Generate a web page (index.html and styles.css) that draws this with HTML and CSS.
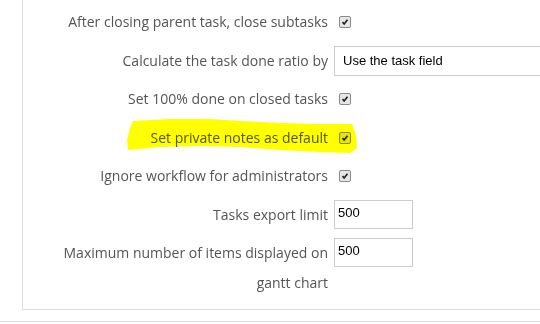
FILE: index.html
```html
<!DOCTYPE html>
<html lang="en-US">
<head>
<title>Issue tracking settings</title>
    <link rel="stylesheet" href="styles.css">
</head>

<body>
    <div class="Box">
        <div class="Settings">
            <p class="Row">
                <label class="Label">After closing parent task, close subtasks</label>
                <span class="Check"><svg viewBox="0 0 12 12" width="12" height="12"><path d="M3 6.2 L5 8.4 L9 3.4" fill="none" stroke="#222" stroke-width="2"/></svg></span>
            </p>
            <p class="Row">
                <label class="Label">Calculate the task done ratio by</label>
                <span class="Select">Use the task field</span>
            </p>
            <p class="Row">
                <label class="Label">Set 100% done on closed tasks</label>
                <span class="Check"><svg viewBox="0 0 12 12" width="12" height="12"><path d="M3 6.2 L5 8.4 L9 3.4" fill="none" stroke="#222" stroke-width="2"/></svg></span>
            </p>
            <p class="Row">
                <label class="Label">Set private notes as default</label>
                <span class="Check"><svg viewBox="0 0 12 12" width="12" height="12"><path d="M3 6.2 L5 8.4 L9 3.4" fill="none" stroke="#222" stroke-width="2"/></svg></span>
            </p>
            <p class="Row">
                <label class="Label">Ignore workflow for administrators</label>
                <span class="Check"><svg viewBox="0 0 12 12" width="12" height="12"><path d="M3 6.2 L5 8.4 L9 3.4" fill="none" stroke="#222" stroke-width="2"/></svg></span>
            </p>
            <p class="Row">
                <label class="Label">Tasks export limit</label>
                <span class="Field">500</span>
            </p>
            <p class="Row">
                <label class="Label">Maximum number of items displayed on gantt chart</label>
                <span class="Field">500</span>
            </p>
        </div>
    </div>
    <div class="Footer"></div>

    <!-- marker stroke drawn over the screenshot -->
    <svg class="Marker" width="540" height="324" viewBox="0 0 540 324">
        <polygon points="133,121 170,119 210,119 240,121 280,123 320,124 352,124 356,135 357,148 350,153 320,152 280,150 240,147 200,146 160,147 128,150 127,140 130,128" fill="#ffff00"/>
    </svg>
</body>

</html>
```

FILE: styles.css
```css
body {
    margin: 0px;
    font-family: "Open Sans", "Liberation Sans", sans-serif;
    font-size: 14px;
    color: #555;
    background-color: #FFF;
    overflow: hidden;
}

.Box {
    margin-left: 22px;
    height: 310px;
    box-sizing: border-box;
    border-left: 1px solid #DDD;
    border-bottom: 1px solid #DDD;
    padding-top: 7px;
    overflow: hidden;
}

.Settings {
    display: flex;
    flex-direction: column;
    gap: 8.5px;
    padding-left: 25px;
}

.Row {
    display: flex;
    align-items: flex-start;
    gap: 6px;
    margin: 0px;
}

.Label {
    flex: none;
    width: 280px;
    text-align: right;
    line-height: 30px;
}

.Check {
    display: flex;
    width: 12px;
    height: 12px;
    margin: 9px 0px 0px 5px;
    box-sizing: border-box;
    border: 1px solid #8A8A8A;
    border-radius: 2px;
    background-color: #E6E6E6;
    align-items: center;
    justify-content: center;
}

.Check svg {
    width: 10px;
    height: 10px;
}

.Select {
    flex: none;
    width: 210px;
    height: 30px;
    box-sizing: border-box;
    border: 1px solid #CCC;
    padding: 0px 8px;
    font-family: "Liberation Sans", Arial, sans-serif;
    font-size: 13px;
    line-height: 28px;
    color: #000;
}

.Field {
    flex: none;
    width: 79px;
    height: 29px;
    box-sizing: border-box;
    border: 1px solid #CCC;
    padding: 0px 3px 3px 3px;
    font-family: "Liberation Sans", Arial, sans-serif;
    font-size: 13px;
    line-height: 24px;
    color: #000;
}

.Footer {
    margin-top: 11px;
    border-top: 1px solid #DDD;
}

.Marker {
    position: absolute;
    left: 0px;
    top: 0px;
    pointer-events: none;
    mix-blend-mode: multiply;
}
```
